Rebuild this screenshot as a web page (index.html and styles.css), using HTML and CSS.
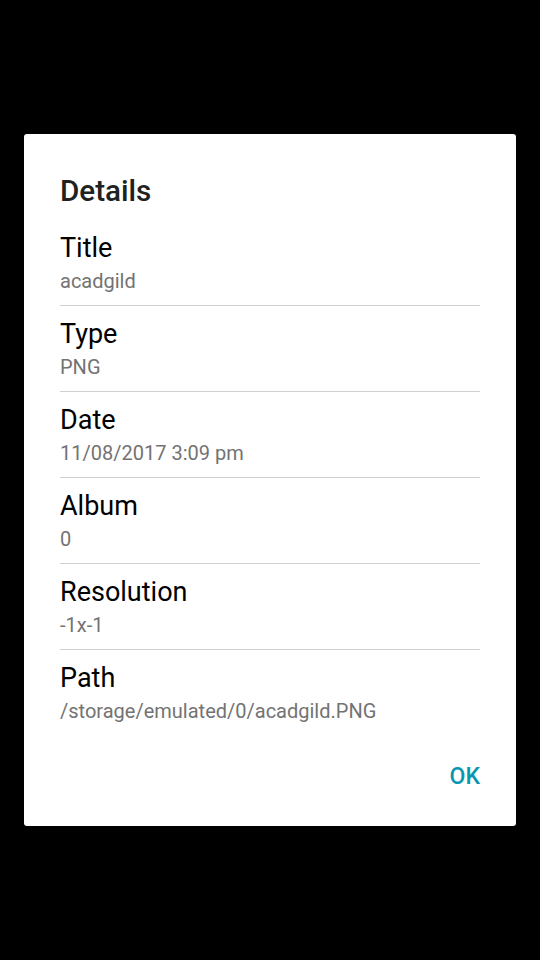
FILE: index.html
```html
<!DOCTYPE html>
<html>
<head>
<meta charset="utf-8">
<link rel="stylesheet" href="styles.css">
</head>
<body>
<div class="dialog">
  <div class="title">Details</div>
  <div class="list">
    <div class="row"><div class="label">Title</div><div class="value">acadgild</div></div>
    <div class="row"><div class="label">Type</div><div class="value">PNG</div></div>
    <div class="row"><div class="label">Date</div><div class="value">11/08/2017 3:09 pm</div></div>
    <div class="row"><div class="label">Album</div><div class="value">0</div></div>
    <div class="row"><div class="label">Resolution</div><div class="value">-1x-1</div></div>
    <div class="row last"><div class="label">Path</div><div class="value">/storage/emulated/0/acadgild.PNG</div></div>
  </div>
  <div class="actions"><span class="ok">OK</span></div>
</div>
</body>
</html>
```
FILE: styles.css
```css
html, body {
  margin: 0;
  padding: 0;
  background: #000;
  width: 540px;
  height: 960px;
  font-family: Roboto, "Liberation Sans", sans-serif;
}
body {
  padding: 134px 24px 0 24px;
  box-sizing: border-box;
}
.dialog {
  background: #fff;
  border-radius: 3px;
  height: 692px;
  box-sizing: border-box;
  padding: 39px 36px 0 36px;
  display: flex;
  flex-direction: column;
}
.title {
  font-size: 29.6px;
  font-weight: 500;
  line-height: 36px;
  color: #212121;
}
.list {
  margin-top: 11px;
  display: flex;
  flex-direction: column;
}
.row {
  padding: 12px 0 10px 0;
  border-bottom: 1px solid #cfcfcf;
}
.row.last {
  border-bottom: none;
}
.label {
  font-size: 27px;
  line-height: 32px;
  color: #000;
}
.value {
  margin-top: 3px;
  font-size: 20px;
  line-height: 28px;
  color: #737373;
}
.actions {
  display: flex;
  justify-content: flex-end;
  margin-top: 29px;
}
.ok {
  font-size: 23px;
  font-weight: 500;
  line-height: 26px;
  color: #0996b3;
}
```
